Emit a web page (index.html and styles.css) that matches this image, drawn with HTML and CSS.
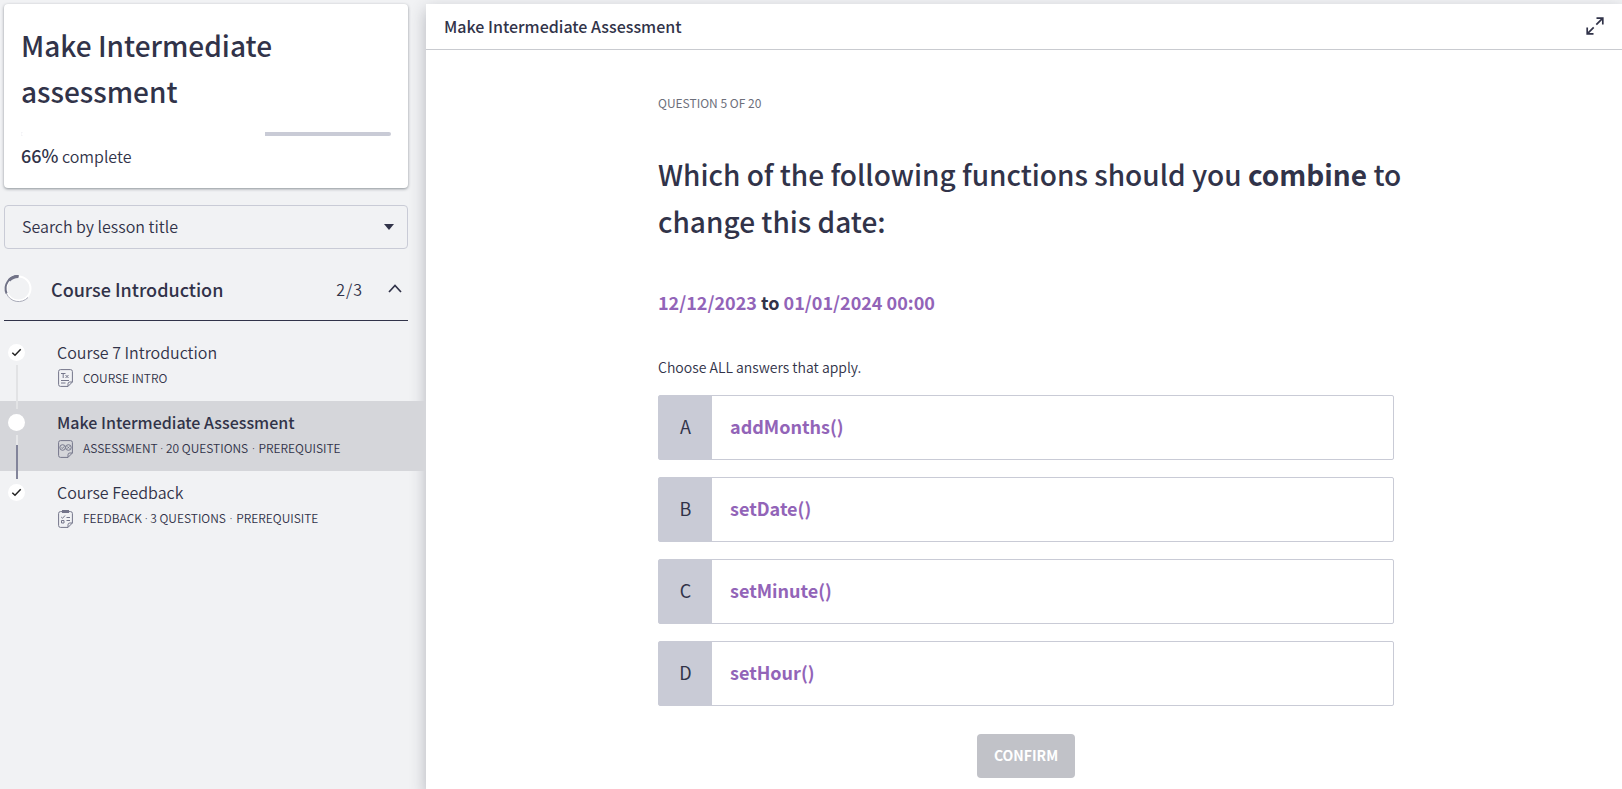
FILE: index.html
```html
<!DOCTYPE html>
<html lang="en">
<head>
<meta charset="utf-8">
<meta name="viewport" content="width=device-width, initial-scale=1">
<title>Make Intermediate Assessment</title>
<link rel="stylesheet" href="styles.css">
</head>
<body>
<div class="layout">
  <aside class="sidebar">
    <div class="sidebar-top">
      <section class="course-card">
        <h1 class="course-title">Make Intermediate assessment</h1>
        <div class="progress" role="progressbar" aria-label="Course progress" aria-valuenow="66" aria-valuemin="0" aria-valuemax="100">
          <div class="progress-fill" style="width:66%"></div>
        </div>
        <p class="progress-label"><strong>66%</strong> complete</p>
      </section>
      <div class="search">
        <select class="search-select" aria-label="Search by lesson title">
          <option>Search by lesson title</option>
        </select>
        <svg class="search-caret" viewBox="0 0 10 6" aria-hidden="true"><path d="M0 0h10L5 6z" fill="currentColor"/></svg>
      </div>
      <button class="section-head" type="button" aria-expanded="true">
        <svg class="ring" viewBox="0 0 27 27" aria-hidden="true">
          <circle cx="13.5" cy="13.5" r="12" fill="none" stroke="#fff" stroke-width="2"/>
          <path d="M1.500 18.500A13 13 0 0 0 23 22.500" fill="none" stroke="#a9abb8" stroke-width="1"/>
          <path d="M1.600 18.500A12.600 12.600 0 0 1 13.500 1" fill="none" stroke="#717387" stroke-width="2"/>
          <path d="M4 5.600A12.200 12.200 0 0 1 13.500 1.500" fill="none" stroke="#717387" stroke-width="3"/>
        </svg>
        <span class="section-name">Course Introduction</span>
        <span class="section-count">2/3</span>
        <svg class="chevron" viewBox="0 0 14 9" aria-hidden="true"><path d="M1 8l6-6.500 6 6.500" fill="none" stroke="currentColor" stroke-width="1.700"/></svg>
      </button>
    </div>
    <ul class="lessons">
      <li class="lesson">
        <span class="marker"><svg viewBox="0 0 17 17" aria-hidden="true"><path d="M4.300 8.800l2.700 2.500 5.700-6" fill="none" stroke="#222" stroke-width="1.500"/></svg></span>
        <a class="lesson-link" href="#intro">
          <span class="lesson-title">Course 7 Introduction</span>
          <span class="lesson-meta">
            <svg class="doc" viewBox="0 0 15 18" aria-hidden="true"><g fill="none" stroke="currentColor"><path d="M2.500.6h10q1.900 0 1.900 1.900v10.500l-4.400 4.400H2.500Q.6 17.400.6 15.500v-13Q.6.6 2.500.6zM14.400 13h-2.600q-1.800 0-1.800 1.800v2.600"/><path d="M3 4.500h4.500M5.200 4.500v4.500M7.500 6l3 3M10.500 6l-3 3M3 11.500h8M3 14h4.500"/></g></svg>
            <span>COURSE INTRO</span>
          </span>
        </a>
      </li>
      <li class="lesson lesson-active">
        <span class="marker"></span>
        <a class="lesson-link" href="#assessment" aria-current="page">
          <span class="lesson-title">Make Intermediate Assessment</span>
          <span class="lesson-meta">
            <svg class="doc" viewBox="0 0 15 18" aria-hidden="true"><g fill="none" stroke="currentColor"><path d="M2.500.6h10q1.900 0 1.900 1.900v10.500l-4.400 4.400H2.500Q.6 17.400.6 15.500v-13Q.6.6 2.500.6zM14.400 13h-2.600q-1.800 0-1.800 1.800v2.600"/><circle cx="4.600" cy="7.500" r="2.800"/><circle cx="10.400" cy="7.500" r="2.800"/><path d="M3.300 7.500l1 1 1.800-2M9.400 6.500l2 2M11.400 6.500l-2 2"/></g></svg>
            <span>ASSESSMENT <span class="dot">·</span> 20 QUESTIONS <span class="dot dot-wide">·</span> PREREQUISITE</span>
          </span>
        </a>
      </li>
      <li class="lesson">
        <span class="marker"><svg viewBox="0 0 17 17" aria-hidden="true"><path d="M4.300 8.800l2.700 2.500 5.700-6" fill="none" stroke="#222" stroke-width="1.500"/></svg></span>
        <a class="lesson-link" href="#feedback">
          <span class="lesson-title">Course Feedback</span>
          <span class="lesson-meta">
            <svg class="doc" viewBox="0 0 15 18" aria-hidden="true"><path d="M4 0h7v3H4z" fill="currentColor"/><g fill="none" stroke="currentColor"><path d="M2.500 1.600h10q1.900 0 1.900 1.900v9.500l-4.400 4.400H2.500Q.6 17.400.6 15.500v-12q0-1.900 1.900-1.900zM14.400 13h-2.600q-1.800 0-1.800 1.800v2.600"/><path d="M3.200 7l1.300 1.300L7 5.500M8.500 7.500H12M8.500 10.500H12M3.500 10.500h2.500V13H3.500z"/></g></svg>
            <span>FEEDBACK <span class="dot">·</span> 3 QUESTIONS <span class="dot dot-wide">·</span> PREREQUISITE</span>
          </span>
        </a>
      </li>
    </ul>
  </aside>
  <main class="panel">
    <header class="panel-head">
      <h2 class="panel-title">Make Intermediate Assessment</h2>
      <button class="expand" type="button" aria-label="Expand">
        <svg viewBox="0 0 18 18" aria-hidden="true"><path d="M10.500 1.200H16.800V7.500M16.300 1.700l-6 6M1.200 10.500V16.800H7.500M1.700 16.300l6-6" fill="none" stroke="currentColor" stroke-width="1.700"/></svg>
      </button>
    </header>
    <form class="question">
      <p class="question-count">QUESTION 5 OF 20</p>
      <h3 class="question-title">Which of the following functions should you <b>combine</b> to change this date:</h3>
      <p class="question-detail"><span class="code">12/12/2023</span> to <span class="code">01/01/2024 00:00</span></p>
      <p class="question-hint">Choose ALL answers that apply.</p>
      <div class="answers">
        <button class="answer" type="button" aria-pressed="false"><span class="letter">A</span><span class="answer-text">addMonths()</span></button>
        <button class="answer" type="button" aria-pressed="false"><span class="letter">B</span><span class="answer-text">setDate()</span></button>
        <button class="answer" type="button" aria-pressed="false"><span class="letter">C</span><span class="answer-text">setMinute()</span></button>
        <button class="answer" type="button" aria-pressed="false"><span class="letter">D</span><span class="answer-text">setHour()</span></button>
      </div>
      <button class="confirm" type="button" disabled>CONFIRM</button>
    </form>
  </main>
</div>
</body>
</html>
```

FILE: styles.css
```css
* {
  box-sizing: border-box;
}

body {
  margin: 0;
  background: #f1f2f4;
  color: #313349;
  font-family: "Noto Sans CJK SC", "Noto Sans", sans-serif;
  font-size: 16px;
  font-weight: 350;
  line-height: 24px;
}

h1, h2, h3, p, ul {
  margin: 0;
  padding: 0;
}

button, select {
  font: inherit;
  color: inherit;
}

svg {
  display: block;
}

.layout {
  display: flex;
  min-height: 100vh;
  padding-top: 4px;
  overflow: hidden;
}

.sidebar {
  flex: 0 0 426px;
}

.sidebar-top {
  padding: 0 18px 0 4px;
}

.course-card {
  padding: 18px 17px 20px;
  background: #fff;
  border-radius: 4px;
  box-shadow: 0 1px 3px rgba(40, 50, 60, .5);
}

.course-title {
  font-size: 28px;
  font-weight: 500;
  line-height: 46px;
}

.progress {
  height: 4px;
  margin: 18px 0 8px;
  border-radius: 2px;
  background: #c9cbd6;
  overflow: hidden;
}

.progress-fill {
  height: 100%;
  background: #fff;
}

.progress-label strong {
  font-size: 18px;
  font-weight: 500;
  line-height: 18px;
}

.search {
  display: grid;
  align-items: center;
  margin-top: 17px;
}

.search-select {
  grid-area: 1 / 1;
  height: 44px;
  padding: 0 17px 3px;
  border: 1px solid #c9cbd6;
  border-radius: 4px;
  background: transparent;
  appearance: none;
}

.search-caret {
  grid-area: 1 / 1;
  justify-self: end;
  width: 10px;
  height: 6px;
  margin-right: 14px;
  pointer-events: none;
}

.section-head {
  display: flex;
  align-items: center;
  width: 100%;
  height: 72px;
  padding: 8px 6px 0 1px;
  border: 0;
  border-bottom: 1px solid #313349;
  background: none;
  text-align: left;
}

.ring {
  width: 27px;
  height: 27px;
  overflow: visible;
}

.section-name {
  flex: 1;
  margin-left: 19px;
  font-size: 18px;
  font-weight: 500;
}

.section-count {
  letter-spacing: 1px;
}

.chevron {
  width: 14px;
  height: 9px;
  margin-left: 25px;
}

.lessons {
  padding-top: 10px;
  list-style: none;
}

.lesson {
  position: relative;
  display: flex;
  gap: 32px;
  height: 70px;
  padding: 9px 16px 0 8px;
}

.lesson-active {
  background: #d5d6da;
}

.marker {
  flex: none;
  width: 17px;
  height: 17px;
  margin-top: 4px;
  border-radius: 50%;
  background: #fff;
}

.lesson:not(:last-child)::after {
  content: "";
  position: absolute;
  z-index: 1;
  left: 16px;
  top: 34px;
  width: 2px;
  height: 44px;
  background: #e2e3e5;
}

.lesson-active:not(:last-child)::after {
  background: linear-gradient(#e6e7e9 10px, #82849a 10px);
}

.lesson-link {
  display: grid;
  align-content: start;
  row-gap: 4px;
  color: inherit;
  text-decoration: none;
}

.lesson-active .lesson-title {
  font-weight: 500;
}

.lesson-meta {
  display: flex;
  align-items: center;
  gap: 10px;
  font-size: 12px;
  line-height: 20px;
}

.dot {
  font-family: "Noto Sans", sans-serif;
}

.dot-wide {
  margin: 0 1px;
}

.doc {
  width: 15px;
  height: 18px;
  margin-left: 1px;
  color: #74768a;
}

.panel {
  flex: 1;
  min-width: 0;
  background: #fff;
  box-shadow: 0 6px 15px rgba(40, 42, 60, .3);
}

.panel-head {
  display: flex;
  align-items: center;
  justify-content: space-between;
  height: 46px;
  padding: 0 18px 2px;
  border-bottom: 1px solid #c9cbd0;
}

.panel-title {
  font-size: 16px;
  font-weight: 500;
}

.expand {
  width: 18px;
  padding: 0;
  border: 0;
  background: none;
}

.question {
  display: flex;
  flex-direction: column;
  max-width: 772px;
  margin: 0 auto;
  padding: 44px 16px 12px 20px;
}

.question-count {
  color: #6d6f7b;
  font-size: 12px;
  font-weight: 400;
  line-height: 18px;
}

.question-title {
  margin: 39px -16px 0 0;
  font-size: 28px;
  font-weight: 500;
  line-height: 47px;
}

.question-title b {
  font-weight: 700;
}

.question-detail {
  margin-top: 43px;
  font-size: 18px;
  font-weight: 700;
  line-height: 28px;
}

.code, .answer-text {
  color: #9264b8;
}

.question-hint {
  margin-top: 39px;
  font-size: 14px;
}

.answers {
  display: grid;
  gap: 17px;
  margin-top: 16px;
}

.answer {
  display: flex;
  height: 65px;
  padding: 0;
  border: 1px solid #c9cbd6;
  border-radius: 2px;
  background: #fff;
  align-items: stretch;
  font-size: 18px;
  text-align: left;
}

.letter {
  display: grid;
  place-items: center;
  width: 53px;
  padding-bottom: 3px;
  background: #c9cbd6;
  font-weight: 400;
}

.answer-text {
  align-self: center;
  padding: 0 0 3px 18px;
  font-weight: 700;
}

.confirm {
  align-self: center;
  height: 44px;
  margin-top: 28px;
  padding: 0 17px 2px;
  border: 0;
  border-radius: 4px;
  background: #c1c2c8;
  color: #fff;
  font-size: 14px;
  font-weight: 700;
}
```
